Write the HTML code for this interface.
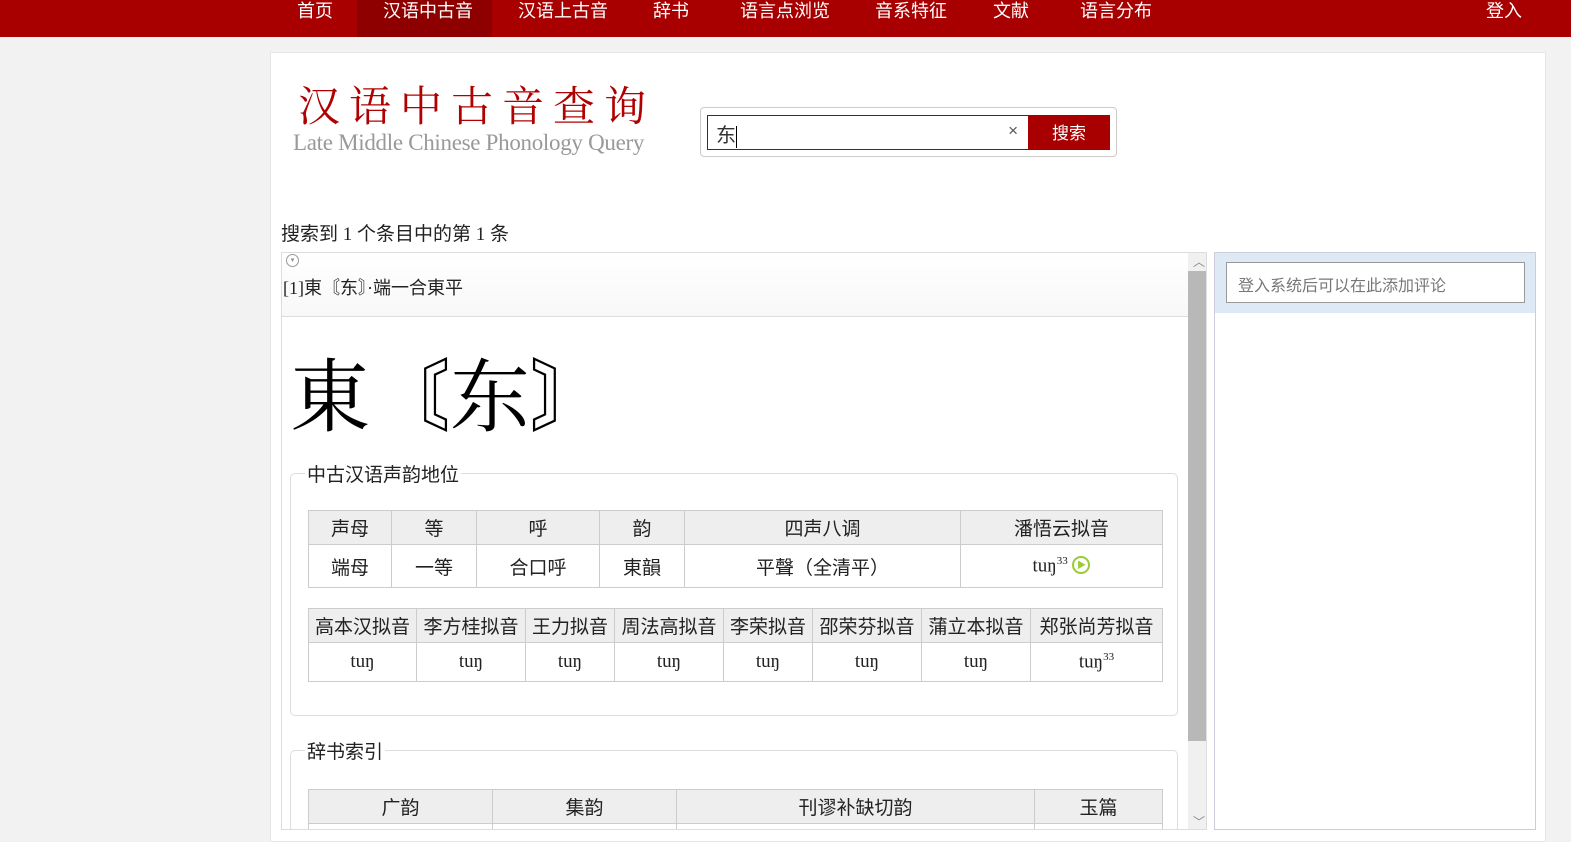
<!DOCTYPE html>
<html style="width:1571px;height:842px;overflow:hidden"><head><meta charset="utf-8"><style>
*{margin:0;padding:0;box-sizing:border-box}
body{width:1571px;height:842px;background:#f2f2f2;font-family:"Liberation Serif","Noto Serif CJK SC",serif;position:relative;overflow:hidden;color:#222}
.a{position:absolute}
.nav{left:0;top:0;width:1571px;height:37px;background:#a80000}
.nav span{position:absolute;top:-3px;color:#fff;font:18px "Liberation Sans","Noto Sans CJK SC",sans-serif}
table{border-collapse:collapse;position:absolute;table-layout:fixed}
td,th{border:1px solid #ccc;text-align:center;font-weight:normal;font-size:19px;font-family:"Liberation Serif","Noto Sans CJK SC",serif}
th{background:#eee;font-family:"Liberation Sans","Noto Sans CJK SC",sans-serif}
td{background:#fff}
sup{font-size:11px}
fieldset{position:absolute;border:1px solid #ddd;border-radius:5px}
legend{font:19px "Liberation Sans","Noto Sans CJK SC",sans-serif;margin-left:14px;padding:0 2px}
</style></head><body>
<div class="a nav">
<div class="a" style="left:357px;top:0;width:135px;height:37px;background:#8e0000"></div>
<span style="left:297px">首页</span><span style="left:383px">汉语中古音</span><span style="left:518px">汉语上古音</span><span style="left:653px">辞书</span><span style="left:740px">语言点浏览</span><span style="left:875px">音系特征</span><span style="left:993px">文献</span><span style="left:1080px">语言分布</span><span style="left:1486px">登入</span>
</div>
<div class="a" style="left:270px;top:52px;width:1276px;height:790px;background:#fff;border:1px solid #e6e6e6"></div>
<div class="a" style="left:298px;top:76px;font:42px 'Noto Serif CJK SC',serif;color:#b00000;letter-spacing:9px;line-height:56px">汉语中古音查询</div>
<div class="a" style="left:293px;top:130px;font:23px 'Liberation Serif',serif;color:#999;letter-spacing:-0.3px">Late Middle Chinese Phonology Query</div>
<div class="a" style="left:700px;top:107px;width:417px;height:50px;border:1px solid #ccc;border-radius:4px;background:#fff"></div>
<div class="a" style="left:707px;top:115px;width:322px;height:35px;border:1px solid #a80000;background:#fff;font:20px 'Noto Sans CJK SC',sans-serif;padding:3px 8px;color:#333">东<span style="border-left:1px solid #000;height:22px;display:inline-block;vertical-align:middle"></span><span style="position:absolute;right:10px;top:5px;font:17px 'Liberation Sans',sans-serif;color:#555">×</span></div>
<div class="a" style="left:1028px;top:115px;width:82px;height:35px;background:#a80000;color:#fff;font:17px 'Noto Sans CJK SC',sans-serif;text-align:center;line-height:34px">搜索</div>
<div class="a" style="left:281px;top:219px;font:19px 'Liberation Serif','Noto Sans CJK SC',serif">搜索到 1 个条目中的第 1 条</div>
<div class="a" style="left:0;top:0;width:1210px;height:830px;overflow:hidden">
<div class="a" style="left:281px;top:252px;width:926px;height:580px;border:1px solid #ddd;background:#fff;overflow:hidden">
<div class="a" style="left:0;top:0;width:906px;height:64px;background:linear-gradient(#fff,#f8f8f8);border-bottom:1px solid #ddd"></div>
<div class="a" style="left:4px;top:1px;width:13px;height:13px;border:1px solid #999;border-radius:50%;font-size:7px;text-align:center;color:#888;line-height:11px">▾</div>
<div class="a" style="left:1px;top:21px;font:18px 'Liberation Serif','Noto Sans CJK SC',serif">[1]東〘东〙·端一合東平</div>
<div class="a" style="left:8px;top:88px;font:80px 'Noto Serif CJK SC',serif;line-height:100px;color:#000">東〘东〙</div>
<div class="a" style="left:906px;top:0;width:20px;height:580px;background:#f0f0f0"></div>
<div class="a" style="left:906px;top:18px;width:20px;height:470px;background:#b8b8b8"></div>
<div class="a" style="left:911px;top:0;font:12px sans-serif;color:#888">︿</div>
<div class="a" style="left:911px;top:560px;font:12px sans-serif;color:#888">﹀</div>
</div>
<fieldset style="left:290px;top:460px;width:888px;height:256px"><legend>中古汉语声韵地位</legend></fieldset>
<table style="left:308px;top:510px;width:854px">
<colgroup><col style="width:83px"><col style="width:85px"><col style="width:123px"><col style="width:85px"><col style="width:276px"><col style="width:202px"></colgroup>
<tr style="height:34px"><th>声母</th><th>等</th><th>呼</th><th>韵</th><th>四声八调</th><th>潘悟云拟音</th></tr>
<tr style="height:43px"><td>端母</td><td>一等</td><td>合口呼</td><td>東韻</td><td>平聲（全清平）</td><td>tuŋ<sup>33</sup> <span style="display:inline-block;width:18px;height:18px;border-radius:50%;border:2px solid #9c3;color:#9c3;font-size:9px;line-height:14px;vertical-align:3px">▶</span></td></tr>
</table>
<table style="left:308px;top:608px;width:854px">
<colgroup><col style="width:108px"><col style="width:109px"><col style="width:89px"><col style="width:109px"><col style="width:89px"><col style="width:109px"><col style="width:109px"><col style="width:132px"></colgroup>
<tr style="height:34px"><th>高本汉拟音</th><th>李方桂拟音</th><th>王力拟音</th><th>周法高拟音</th><th>李荣拟音</th><th>邵荣芬拟音</th><th>蒲立本拟音</th><th>郑张尚芳拟音</th></tr>
<tr style="height:39px"><td>tuŋ</td><td>tuŋ</td><td>tuŋ</td><td>tuŋ</td><td>tuŋ</td><td>tuŋ</td><td>tuŋ</td><td>tuŋ<sup>33</sup></td></tr>
</table>
<fieldset style="left:290px;top:737px;width:888px;height:120px"><legend>辞书索引</legend></fieldset>
<table style="left:308px;top:789px;width:854px">
<colgroup><col style="width:184px"><col style="width:184px"><col style="width:358px"><col style="width:128px"></colgroup>
<tr style="height:34px"><th>广韵</th><th>集韵</th><th>刊谬补缺切韵</th><th>玉篇</th></tr>
<tr style="height:30px"><td></td><td></td><td></td><td></td></tr>
</table>
<div class="a" style="left:281px;top:829px;width:926px;height:1px;background:#ddd"></div>
</div>
<div class="a" style="left:1214px;top:252px;width:322px;height:578px;border:1px solid #ccd;background:#fff"></div>
<div class="a" style="left:1215px;top:253px;width:320px;height:60px;background:#dde9f4"></div>
<div class="a" style="left:1226px;top:262px;width:299px;height:41px;border:1px solid #999;background:#fff;font:16px 'Noto Sans CJK SC',sans-serif;color:#777;padding:9px 11px">登入系统后可以在此添加评论</div>
</body></html>
